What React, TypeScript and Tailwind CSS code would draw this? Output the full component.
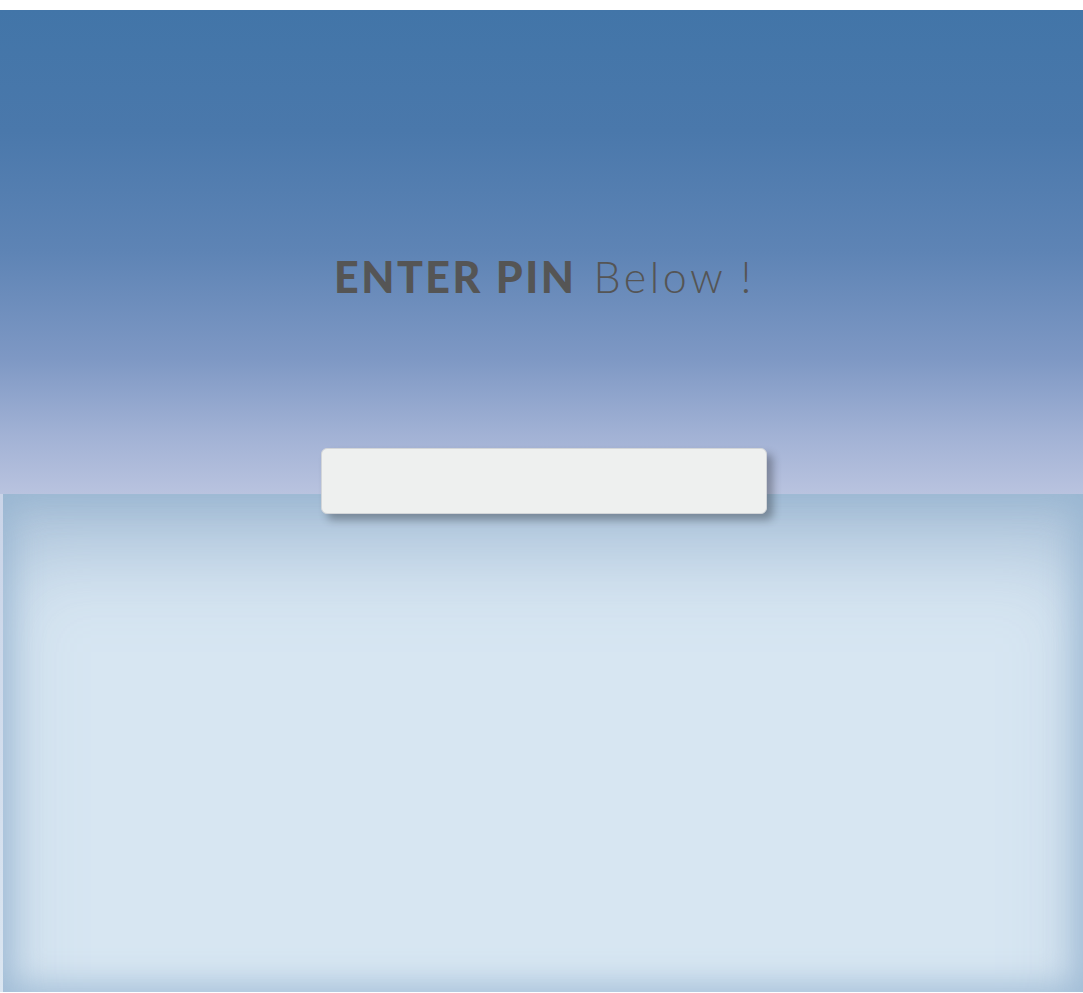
import React from "react";

const App: React.FC = () => {
  return (
    <div className="min-h-[993px] w-full bg-white pt-[10px] font-['Lato',sans-serif]">
      <div className="bg-gradient-to-b from-[#b9c3df] to-[#dbe6f1]">
        <div className="relative z-10 flex h-[484px] flex-col items-center bg-[linear-gradient(to_bottom,#4275a8_0%,#4a78ab_25%,#5e84b5_50%,#7e98c4_72%,#a2b2d5_88%,#b9c3df_100%)]">
          <h1 className="mt-[245px] ml-[6px] shrink-0 text-[43px] leading-none whitespace-nowrap text-[#555555]">
            <span className="font-black tracking-[2.5px]">ENTER PIN</span>
            <span className="ml-[17px] font-light tracking-[3.5px]">Below !</span>
          </h1>
          <input
            type="password"
            className="mt-[150px] ml-[4px] h-[66px] w-[446px] shrink-0 rounded-md border border-[#d2d5d8] bg-[#eef0ef] shadow-[6px_6px_8px_rgba(0,0,0,0.3)] outline-none"
          />
        </div>
        <div className="ml-[3px] h-[498px] bg-[#d7e6f2] shadow-[inset_0_0_30px_8px_rgba(150,180,208,0.75),inset_0_70px_90px_-20px_rgba(140,168,200,0.7)]" />
      </div>
    </div>
  );
};

export default App;
